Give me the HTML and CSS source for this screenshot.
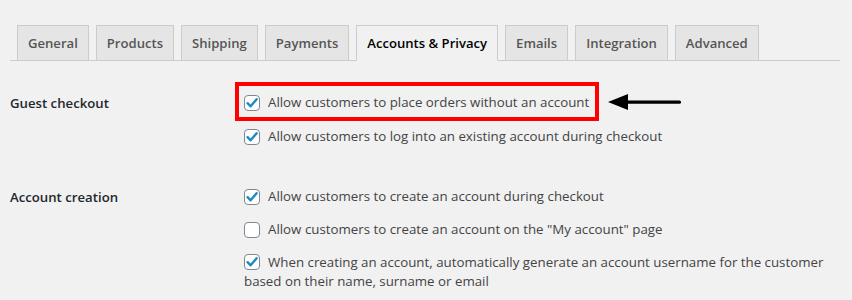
FILE: index.html
```html
<!DOCTYPE html>
<html>
<head>
<meta charset="utf-8">
<link rel="stylesheet" href="styles.css">
</head>
<body>
<div class="wrap">
  <nav class="tabs">
    <a class="tab">General</a>
    <a class="tab">Products</a>
    <a class="tab">Shipping</a>
    <a class="tab">Payments</a>
    <a class="tab active">Accounts &amp; Privacy</a>
    <a class="tab">Emails</a>
    <a class="tab">Integration</a>
    <a class="tab">Advanced</a>
  </nav>

  <div class="settings">
    <div class="row">
      <div class="label">Guest checkout</div>
      <div class="options">
        <label class="opt highlighted">
          <span class="cb checked"><svg viewBox="0 0 16 16" width="16" height="16"><path d="M3.6 8.2 L6.6 11.3 L12.6 4.2" fill="none" stroke="#1e8cbe" stroke-width="2.4" stroke-linecap="round" stroke-linejoin="round"/></svg></span>
          <span class="txt">Allow customers to place orders without an account</span>
          <span class="redbox"><svg class="arrow" viewBox="0 0 74 18" width="74" height="18"><polygon points="0,9 20,1 20,17" fill="#000"/><rect x="18" y="7.5" width="55" height="3.2" rx="1.5" fill="#000"/></svg></span>
        </label>
        <label class="opt">
          <span class="cb checked"><svg viewBox="0 0 16 16" width="16" height="16"><path d="M3.6 8.2 L6.6 11.3 L12.6 4.2" fill="none" stroke="#1e8cbe" stroke-width="2.4" stroke-linecap="round" stroke-linejoin="round"/></svg></span>
          <span class="txt">Allow customers to log into an existing account during checkout</span>
        </label>
      </div>
    </div>

    <div class="row">
      <div class="label">Account creation</div>
      <div class="options">
        <label class="opt">
          <span class="cb checked"><svg viewBox="0 0 16 16" width="16" height="16"><path d="M3.6 8.2 L6.6 11.3 L12.6 4.2" fill="none" stroke="#1e8cbe" stroke-width="2.4" stroke-linecap="round" stroke-linejoin="round"/></svg></span>
          <span class="txt">Allow customers to create an account during checkout</span>
        </label>
        <label class="opt">
          <span class="cb"></span>
          <span class="txt">Allow customers to create an account on the "My account" page</span>
        </label>
        <label class="opt wrapline">
          <span class="txt"><span class="cb checked inline"><svg viewBox="0 0 16 16" width="16" height="16"><path d="M3.6 8.2 L6.6 11.3 L12.6 4.2" fill="none" stroke="#1e8cbe" stroke-width="2.4" stroke-linecap="round" stroke-linejoin="round"/></svg></span>When creating an account, automatically generate an account username for the customer based on their name, surname or email</span>
        </label>
      </div>
    </div>
  </div>
</div>
</body>
</html>
```

FILE: styles.css
```css
html, body {
  margin: 0;
  padding: 0;
  background: #f1f1f1;
  overflow: hidden;
}

body {
  font-family: "Open Sans", "Noto Sans", sans-serif;
  color: #444;
  height: 300px;
}

.wrap {
  padding: 25px 12px 0 10px;
}

.tabs {
  display: flex;
  border-bottom: 1px solid #ccc;
  padding-left: 7px;
  gap: 7px;
  height: 35px;
}

.tab {
  display: block;
  box-sizing: border-box;
  height: 36px;
  padding: 5px 10px;
  border: 1px solid #ccc;
  background: #e5e5e5;
  color: #555;
  font-size: 13.1px;
  font-weight: 600;
  line-height: 24px;
  white-space: nowrap;
}

.tab.active {
  background: #f1f1f1;
  color: #000;
  border-bottom-color: #f1f1f1;
}

.settings {
  padding-top: 32px;
}

.row {
  display: grid;
  grid-template-columns: 234px 1fr;
  margin-bottom: 41px;
}

.label {
  font-size: 13.2px;
  font-weight: 600;
  color: #23282d;
  line-height: 19px;
  padding-top: 1px;
}

.options {
  display: flex;
  flex-direction: column;
  gap: 14px;
}

.opt {
  position: relative;
  display: flex;
  align-items: center;
  gap: 8px;
  font-size: 13.3px;
  line-height: 19px;
  color: #444;
  align-self: flex-start;
}

.opt.highlighted {
  margin-bottom: 1px;
}

.opt.wrapline {
  display: block;
  align-self: stretch;
  padding-right: 14px;
}

.cb {
  box-sizing: border-box;
  width: 16px;
  height: 16px;
  flex: none;
  border: 1px solid #7e8993;
  border-radius: 4px;
  background: #fff;
  display: flex;
  align-items: center;
  justify-content: center;
}

.cb svg {
  display: block;
  margin: -1px;
}

.cb.inline {
  display: inline-flex;
  vertical-align: -3px;
  margin-right: 8px;
}

.txt {
  white-space: nowrap;
}

.wrapline .txt {
  white-space: normal;
}

.redbox {
  position: absolute;
  left: -9px;
  right: -10px;
  top: -11px;
  bottom: -9px;
  border: 4px solid #f00;
}

.arrow {
  position: absolute;
  left: calc(100% + 13px);
  top: 50%;
  margin-top: -9px;
  display: block;
}
```
